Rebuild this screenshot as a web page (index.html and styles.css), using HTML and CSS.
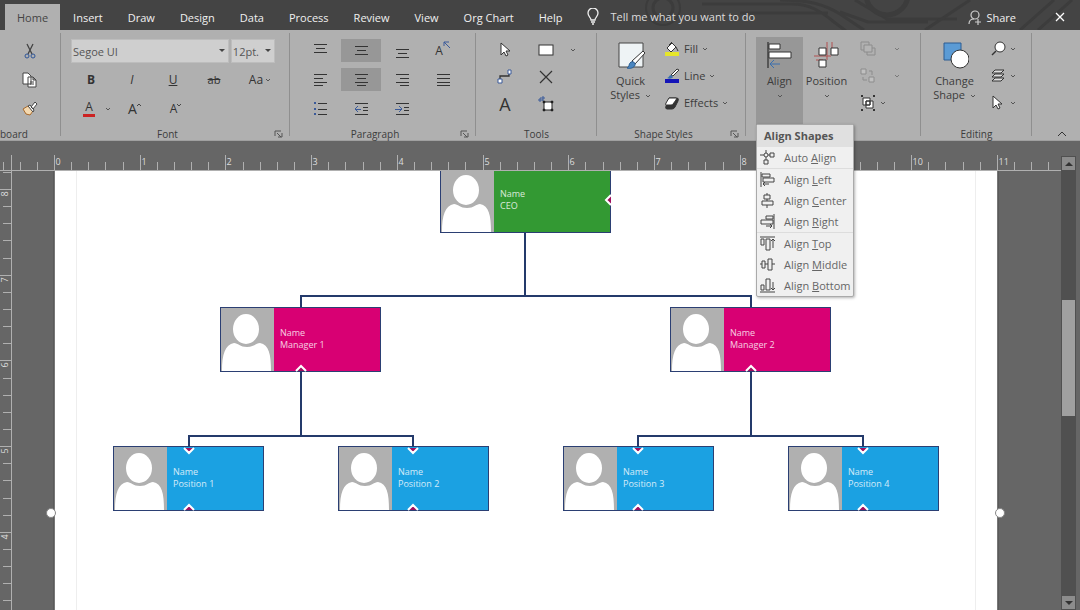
FILE: index.html
```html
<!DOCTYPE html>
<html lang="en">
<head>
    <meta charset="UTF-8">
    <meta name="viewport" content="width=device-width, initial-scale=1.0">
    <title>Org Chart</title>
    <link rel="stylesheet" href="styles.css">
</head>
<body>
    <svg class="defs" aria-hidden="true">
        <symbol id="chev" viewBox="0 0 6 4"><path d="M1 1l2 2 2-2" fill="none" stroke="#555"/></symbol>
        <symbol id="launch" viewBox="0 0 9 8"><path d="M1 6V1h6M3 3l4 4M8 3v4H4" fill="none" stroke="#555"/></symbol>
        <symbol id="person" viewBox="0 0 53 63">
            <path d="M1 63C1 46 4 37 13 35c4 0 6 4 13 4s9-4 13-4c9 2 11 11 11 28z" fill="#fff"/>
            <ellipse cx="25" cy="21" rx="14" ry="16" fill="#b0b0b0"/>
            <ellipse cx="25" cy="21" rx="13" ry="15" fill="#fff"/>
        </symbol>
        <symbol id="cursor" viewBox="0 0 12 16"><path d="M2 1v12l3-3 2 4 2-1-2-4h4z" fill="#fff" stroke="#333"/></symbol>
    </svg>

    <header class="titlebar">
        <svg class="circuit" width="440" height="30" fill="none" stroke="#3c3c3c" stroke-width="3">
            <circle cx="23" cy="8" r="10"/><circle cx="23" cy="8" r="17" stroke-width="2"/>
            <path d="M62 4h90c18 0 30 8 42 18l12 9M100 13h88M140 0c28 0 44 4 60 14l24 16M215 0l32 19h70M200 12l28 10h60"/>
            <circle cx="247" cy="-6" r="21" stroke-width="5"/>
            <path d="M285 30l45-30M380 30l34-30M398 30l34-30"/>
        </svg>
        <nav class="tabs">
            <a href="#" class="active">Home</a>
            <a href="#">Insert</a>
            <a href="#">Draw</a>
            <a href="#">Design</a>
            <a href="#">Data</a>
            <a href="#">Process</a>
            <a href="#">Review</a>
            <a href="#">View</a>
            <a href="#">Org Chart</a>
            <a href="#">Help</a>
        </nav>
        <label class="tell">
            <svg width="12" height="17" fill="none" stroke="#eee" stroke-width="1.3"><path d="M4 12c0-3-3-3-3-7a5 5 0 0 1 10 0c0 4-3 4-3 7zM4 14h4M5 16h2"/></svg>
            <input type="text" placeholder="Tell me what you want to do" aria-label="Tell me what you want to do">
        </label>
        <button class="share">
            <svg width="14" height="15" fill="none" stroke="#ccc" stroke-width="1.2"><circle cx="7" cy="5" r="4"/><path d="M1 14c0-3 2-5 5-5M7 12h6M10 9v6"/></svg>
            Share
        </button>
        <button class="close" aria-label="Close"><svg width="10" height="10" stroke="#fff" stroke-width="1.3"><path d="M1 1l8 8M9 1l-8 8"/></svg></button>
    </header>

    <section class="ribbon">
        <div class="group clipboard">
            <div class="tools">
                <button aria-label="Cut"><svg width="12" height="16" fill="none" stroke="#444"><path d="M3 1l5 10M9 1L4 11" stroke-width="1.3"/><circle cx="3" cy="13" r="2" stroke="#2f5597"/><circle cx="9" cy="13" r="2" stroke="#2f5597"/></svg></button>
                <button aria-label="Copy"><svg width="16" height="16" fill="#fff" stroke="#444"><path d="M1 1h5l3 3v8H1zM6 5h5l3 3v7H6zM11 5v3h3M8 10h4M8 12h4"/></svg></button>
                <button aria-label="Format painter"><svg width="16" height="16"><path d="M1 8l5-3 5 5-3 4-4-1z" fill="#f4d9b0" stroke="#a86a2c"/><path d="M6 5l2-1 4 5-1 2zM9 6l4-5 2 2-4 5z" fill="#fff" stroke="#444"/></svg></button>
            </div>
            <footer><span>board</span></footer>
        </div>

        <div class="group font">
            <div class="tools">
                <div class="selects">
                    <span class="select family"><select aria-label="Font"><option>Segoe UI</option></select></span>
                    <span class="select size"><select aria-label="Font size"><option>12pt.</option></select></span>
                </div>
                <button class="glyph"><b>B</b></button>
                <button class="glyph"><i>I</i></button>
                <button class="glyph"><u>U</u></button>
                <button class="glyph small"><s>ab</s></button>
                <button class="glyph wide">Aa <svg class="chev"><use href="#chev"/></svg></button>
                <button class="glyph color"><span>A</span> <svg class="chev"><use href="#chev"/></svg></button>
                <button class="glyph big">A<svg width="5" height="12" fill="none" stroke="#444"><path d="M0 3l2-2 2 2"/></svg></button>
                <button class="glyph shrink">A<svg width="5" height="12" fill="none" stroke="#444"><path d="M0 1l2 2 2-2"/></svg></button>
            </div>
            <footer><span>Font</span><button aria-label="Font settings"><svg width="9" height="8"><use href="#launch"/></svg></button></footer>
        </div>

        <div class="group paragraph">
            <div class="tools">
                <button aria-label="Top"><svg class="lines"><path d="M1 1h13M3 5h9M1 9h13"/></svg></button>
                <button class="on" aria-label="Middle"><svg class="lines"><path d="M1 3h13M3 7h9M1 11h13"/></svg></button>
                <button aria-label="Bottom"><svg class="lines"><path d="M1 6h13M3 10h9M1 14h13"/></svg></button>
                <button aria-label="Text direction" class="glyph direction">A<svg width="8" height="14" fill="none" stroke="#3a5a9a"><path d="M1 5V1h5M1 1l6 6"/></svg></button>
                <button aria-label="Left"><svg class="lines"><path d="M1 2h13M1 6h9M1 10h13M1 13h9"/></svg></button>
                <button class="on" aria-label="Center"><svg class="lines"><path d="M1 2h13M3 6h9M1 10h13M3 13h9"/></svg></button>
                <button aria-label="Right"><svg class="lines"><path d="M1 2h13M5 6h9M1 10h13M5 13h9"/></svg></button>
                <button aria-label="Justify"><svg class="lines"><path d="M1 2h13M1 6h13M1 10h13M1 13h13"/></svg></button>
                <button aria-label="Bullets"><svg class="lines"><path d="M5 2h9M5 8h9M5 13h9"/><path d="M1 2h2M1 8h2M1 13h2" stroke="#3a5a9a" stroke-width="2"/></svg></button>
                <button aria-label="Decrease indent"><svg class="lines"><path d="M1 2h13M9 6h5M9 9h5M1 13h13"/><path d="M7 8H2M4 5L1 8l3 3" stroke="#3a5a9a"/></svg></button>
                <button aria-label="Increase indent"><svg class="lines"><path d="M1 2h13M9 6h5M9 9h5M1 13h13"/><path d="M0 8h6M4 5l3 3-3 3" stroke="#3a5a9a"/></svg></button>
            </div>
            <footer><span>Paragraph</span><button aria-label="Paragraph settings"><svg width="9" height="8"><use href="#launch"/></svg></button></footer>
        </div>

        <div class="group draw">
            <div class="tools tight">
                <button aria-label="Pointer"><svg width="12" height="16"><use href="#cursor"/></svg></button>
                <button aria-label="Rectangle"><svg width="16" height="12"><rect x="1" y="1" width="14" height="10" fill="#fff" stroke="#333"/></svg></button>
                <button aria-label="More shapes"><svg class="chev"><use href="#chev"/></svg></button>
                <button class="first" aria-label="Connector"><svg width="16" height="15" fill="none" stroke="#333"><path d="M3 10V7h9V5" stroke-width="1.3"/><path d="M1 10h4v4H1zM11 1h3v4h-3z" fill="#fff" stroke="#3a5a9a"/></svg></button>
                <button aria-label="Delete"><svg width="14" height="14" stroke="#333" stroke-width="1.2"><path d="M1 1l12 12M13 1L1 13"/></svg></button>
                <button class="glyph huge first">A</button>
                <button aria-label="Connection point"><svg width="16" height="16"><path d="M2 6V2h5M5 0v5M0 4h5" fill="none" stroke="#3a5a9a"/><rect x="6" y="6" width="8" height="8" fill="#fff" stroke="#222"/><path d="M5 5h2v2H5zM13 5h2v2h-2zM5 13h2v2H5zM13 13h2v2h-2z" fill="#222" stroke="#222" stroke-width=".5"/></svg></button>
            </div>
            <footer><span>Tools</span></footer>
        </div>

        <div class="group shapes">
            <div class="row">
                <button class="large">
                    <svg width="28" height="29"><path d="M2 2h24v24H2z" fill="#eef3f5" stroke="#444"/><path d="M26 10l2 2-10 11-3-3z" fill="#fff" stroke="#333"/><path d="M10 27c3-1 1-4 4-6 2-1 5 1 4 3-1 3-5 4-8 3z" fill="#4a86c0" stroke="#2c5d92"/></svg>
                    <span>Quick<br>Styles <svg class="chev"><use href="#chev"/></svg></span>
                </button>
                <div class="list">
                    <button><svg width="16" height="16"><path d="M3 7l5-5 4 4-5 5z" fill="#fff" stroke="#333"/><path d="M5 4l3-3M12 6l2 4" stroke="#333" fill="none"/><path d="M1 11h14v4H1z" fill="#e6e62a"/></svg>Fill <svg class="chev"><use href="#chev"/></svg></button>
                    <button><svg width="16" height="16"><path d="M13 1l2 1-6 6-2-1z" fill="#fff" stroke="#333"/><path d="M3 10c2 0 2-3 4-3l2 2c-1 2-4 2-6 1z" fill="#3a6fae"/><path d="M1 11h14v4H1z" fill="#1414b8"/></svg>Line <svg class="chev"><use href="#chev"/></svg></button>
                    <button class="effects"><svg width="16" height="14"><path d="M5 2h8q2 0 1 3l-3 6q-1 2-3 2H3q-2 0-1-3z" fill="#333" stroke="#333"/><path d="M5 2h7q1 0 0 2L9 8q0 1-2 1H2q-1 0 0-2z" fill="#fff" stroke="#333"/></svg>Effects <svg class="chev"><use href="#chev"/></svg></button>
                </div>
            </div>
            <footer><span>Shape Styles</span><button aria-label="Shape style settings"><svg width="9" height="8"><use href="#launch"/></svg></button></footer>
        </div>

        <div class="group arrange">
            <div class="row">
                <div class="dropdown">
                    <button class="large on">
                        <svg width="28" height="29"><path d="M2 1v26" stroke="#333" stroke-width="1.3"/><path d="M3 3h11v5H3zM3 11h22v6H3z" fill="#fff" stroke="#333"/><path d="M14 23H4M8 19l-4 4 4 4" fill="none" stroke="#3a6fae"/></svg>
                        <span>Align<br><svg class="chev"><use href="#chev"/></svg></span>
                    </button>
                    <div class="menu">
                        <h2>Align Shapes</h2>
                        <button><svg class="mi"><path d="M0 5h4M6 0v3M8 5h2M6 7v3"/><circle cx="6" cy="5" r="2"/><path d="M10 3h4v4h-4zM4 10h4v4H4z"/></svg><span>Auto <u>A</u>lign</span></button>
                        <hr>
                        <button><svg class="mi"><path d="M1 0v15M2 2h8v3H2zM3 6h11v4H3zM3 12h6M5 10l-2 2 2 2"/></svg><span>Align <u>L</u>eft</span></button>
                        <button><svg class="mi"><path d="M7 0v2M7 6v2M7 12v3M4 2h6v4H4zM2 8h11v4H2z"/></svg><span>Align <u>C</u>enter</span></button>
                        <button><svg class="mi"><path d="M14 0v15M6 2h7v3H6zM1 6h12v4H1zM6 12h6M10 10l2 2-2 2"/></svg><span>Align <u>R</u>ight</span></button>
                        <hr>
                        <button><svg class="mi"><path d="M0 1h15M1 3h3v6H1zM6 3h4v11H6zM13 12V3M11 5l2-2 2 2"/></svg><span>Align <u>T</u>op</span></button>
                        <button><svg class="mi"><path d="M0 7h2M5 7h3M12 7h3M2 4h3v7H2zM8 2h4v11H8z"/></svg><span>Align <u>M</u>iddle</span></button>
                        <button><svg class="mi"><path d="M0 14h15M1 7h3v5H1zM6 1h4v11H6zM13 4v8M11 10l2 2 2-2"/></svg><span>Align <u>B</u>ottom</span></button>
                    </div>
                </div>
                <button class="large">
                    <svg width="28" height="29"><path d="M14 1v18M19 1v12M1 15h17M3 19h7" stroke="#b05050" fill="none"/><path d="M6 7h7v7H6zM18 7h7v7h-7zM6 19h7v7H6z" fill="#fff" stroke="#333"/></svg>
                    <span>Position<br><svg class="chev"><use href="#chev"/></svg></span>
                </button>
                <div class="list order">
                    <button class="off" aria-label="Bring forward"><svg width="16" height="16" fill="none" stroke="#777"><path d="M1 1h8v8H1zM7 7h8v7H7z"/><path d="M4 4h8v7H4z" fill="#b8b8b8"/></svg><svg class="chev"><use href="#chev"/></svg></button>
                    <button class="off" aria-label="Send backward"><svg width="16" height="16" fill="none" stroke="#777"><path d="M1 1h5v5H1zM9 9h5v5H9z" fill="#ccc"/><path d="M9 3h3v4M3 9v3h4"/></svg><svg class="chev"><use href="#chev"/></svg></button>
                    <button aria-label="Group"><svg width="16" height="16" fill="none" stroke="#333"><path d="M3 3h7v7H3zM6 6h7v7H6z" fill="#fff"/><path d="M6 6h4v4H6z"/><path d="M1 1h2M13 1h2M1 15h2M13 15h2" stroke-width="2"/></svg><svg class="chev"><use href="#chev"/></svg></button>
                </div>
            </div>
        </div>

        <div class="group editing">
            <div class="row">
                <button class="large">
                    <svg width="28" height="29"><path d="M3 2h17v17H3z" fill="#5b9bd5" stroke="#2c5d92"/><circle cx="19" cy="18" r="9" fill="#fff" stroke="#333"/></svg>
                    <span>Change<br>Shape <svg class="chev"><use href="#chev"/></svg></span>
                </button>
                <div class="list icons">
                    <button aria-label="Find"><svg width="16" height="16"><circle cx="9" cy="6" r="5" fill="#fff" stroke="#333"/><path d="M5 10l-4 4" stroke="#333" stroke-width="1.5"/></svg><svg class="chev"><use href="#chev"/></svg></button>
                    <button aria-label="Layers"><svg width="16" height="16" fill="#ddd" stroke="#333"><path d="M4 10l-3 3h9l3-3zM4 6L1 9h9l3-3zM4 2L1 5h9l3-3z"/></svg><svg class="chev"><use href="#chev"/></svg></button>
                    <button aria-label="Select"><svg width="16" height="16"><use href="#cursor" width="12" height="16"/></svg><svg class="chev"><use href="#chev"/></svg></button>
                </div>
            </div>
            <footer><span>Editing</span></footer>
        </div>

        <div class="group rest">
            <button aria-label="Collapse ribbon"><svg width="10" height="6" fill="none" stroke="#333"><path d="M1 5l4-4 4 4"/></svg></button>
        </div>
    </section>

    <main class="workspace">
        <svg class="ruler top"></svg>
        <svg class="ruler left"></svg>
        <div class="canvas">
            <div class="page">
                <div class="card ceo"><svg><use href="#person"/></svg><p>Name<br>CEO</p></div>
                <div class="card manager m1"><svg><use href="#person"/></svg><p>Name<br>Manager 1</p></div>
                <div class="card manager m2"><svg><use href="#person"/></svg><p>Name<br>Manager 2</p></div>
                <div class="card position p1"><svg><use href="#person"/></svg><p>Name<br>Position 1</p></div>
                <div class="card position p2"><svg><use href="#person"/></svg><p>Name<br>Position 2</p></div>
                <div class="card position p3"><svg><use href="#person"/></svg><p>Name<br>Position 3</p></div>
                <div class="card position p4"><svg><use href="#person"/></svg><p>Name<br>Position 4</p></div>
                <svg class="links">
                    <path class="line" d="M470 62v63M246 136v-11h450v11M246 200v65M134 276v-11h224v11M696 200v65M583 276v-11h225v11"/>
                    <path class="mark" d="M556 24l-5 5 5 5M241 200l5-5 5 5M691 200l5-5 5 5"/>
                    <path class="mark" d="M129 277l5 5 5-5M353 277l5 5 5-5M578 277l5 5 5-5M803 277l5 5 5-5"/>
                    <path class="mark" d="M129 339l5-5 5 5M353 339l5-5 5 5M578 339l5-5 5 5M803 339l5-5 5 5"/>
                </svg>
            </div>
            <i class="handle start"></i>
            <i class="handle end"></i>
        </div>
        <div class="scrollbar">
            <button aria-label="Scroll up"><svg width="8" height="4"><path d="M0 4l4-4 4 4z" fill="#333"/></svg></button>
            <div class="track"><div class="thumb"></div></div>
            <button aria-label="Scroll down"><svg width="8" height="4"><path d="M0 0h8L4 4z" fill="#333"/></svg></button>
        </div>
    </main>

    <script src="script.js"></script>
</body>
</html>
```
FILE: styles.css
```css
* {
    box-sizing: border-box;
}

body {
    margin: 0;
    min-height: 100vh;
    display: flex;
    flex-direction: column;
    font-family: "Open Sans", "Noto Sans", sans-serif;
    font-size: 11px;
    color: #3c3c3c;
    background: #666;
    overflow: hidden;
}

button, select, input {
    font: inherit;
    color: inherit;
    border: 0;
    padding: 0;
    background: none;
}

svg {
    flex: none;
}

.defs {
    position: absolute;
    width: 0;
    height: 0;
}

.chev {
    width: 6px;
    height: 4px;
    margin-left: 2px;
    vertical-align: middle;
}

/* title bar */
.titlebar {
    position: relative;
    height: 30px;
    display: flex;
    align-items: center;
    background: #444;
    color: #f0f0f0;
    padding-left: 5px;
}

.circuit {
    position: absolute;
    top: 0;
    right: 0;
}

.tabs {
    display: flex;
    gap: 1px;
    align-self: stretch;
    padding-top: 4px;
}

.tabs a {
    display: flex;
    align-items: center;
    padding: 0 12px;
    color: inherit;
    text-decoration: none;
    font-weight: 500;
}

.tabs a.active {
    background: #b0b0b0;
    color: #444;
}

.tell {
    position: relative;
    display: flex;
    align-items: center;
    gap: 11px;
    flex: 1;
    margin-left: 13px;
    padding-top: 3px;
}

.tell input {
    flex: 1;
}

.tell input::placeholder {
    color: #ddd;
    opacity: 1;
}

.share {
    position: relative;
    display: flex;
    align-items: center;
    gap: 4px;
    padding-top: 4px;
    font-weight: 500;
}

.close {
    position: relative;
    display: flex;
    margin: 3px 15px 0 39px;
}

/* ribbon */
.ribbon {
    display: flex;
    height: 111px;
    background: #b0b0b0;
    border-bottom: 1px solid #a0a0a0;
}

.group {
    position: relative;
    display: flex;
    flex-direction: column;
    flex: none;
}

.group::after {
    content: "";
    position: absolute;
    right: 0;
    top: 3px;
    bottom: 4px;
    width: 1px;
    background: #8f8f8f;
}

.rest::after {
    display: none;
}

.group footer {
    display: flex;
    align-items: center;
    height: 12px;
    margin-top: auto;
    font-size: 10px;
    line-height: 12px;
}

.group footer span {
    flex: 1;
    text-align: center;
}

.group footer button {
    display: flex;
    width: 16px;
}

.tools {
    display: grid;
    grid-template-columns: repeat(5, 40px);
    grid-auto-rows: 23px;
    gap: 6px 1px;
    padding: 9px 0 0 10px;
}

.tools.tight {
    padding-top: 8px;
    row-gap: 4px;
}

.tools button {
    display: flex;
    align-items: center;
    justify-content: center;
}

.on {
    background: #979797;
}

.clipboard { width: 61px; }
.font { width: 229px; }
.paragraph { width: 186px; }
.draw { width: 121px; }
.shapes { width: 149px; }
.arrange { width: 175px; }
.editing { width: 111px; }
.rest { flex: 1; }

.clipboard .tools {
    grid-template-columns: 40px;
}

.clipboard footer span {
    text-align: left;
}

.paragraph .tools {
    grid-template-columns: repeat(4, 40px);
}

.draw .tools {
    grid-template-columns: 40px 40px 10px;
    padding-left: 9px;
}

.draw .first {
    grid-column: 1;
}

.selects {
    grid-column: 1 / -1;
    display: flex;
    gap: 2px;
    color: #555;
}

.select {
    position: relative;
    display: flex;
    height: 24px;
    background: #cfcfcf;
    border: 1px solid #bdbdbd;
}

.select::after {
    content: "";
    position: absolute;
    right: 3px;
    top: 9px;
    border: 3px solid transparent;
    border-top-color: #444;
    border-bottom: 0;
}

.select select {
    appearance: none;
    width: 100%;
    padding-left: 1px;
}

.family { width: 161px; }
.size { width: 45px; }

.glyph {
    font-size: 12px;
    color: #333;
}

.glyph.small {
    font-size: 11px;
}

.glyph.big {
    font-size: 14px;
    padding-left: 6px;
}

.glyph.shrink {
    padding-left: 6px;
}

.glyph.huge {
    font-size: 18px;
}

.glyph.wide {
    padding-left: 10px;
}

.direction svg {
    margin-bottom: 6px;
}

.color {
    gap: 8px;
    padding-left: 12px;
}

.color span {
    width: 14px;
    height: 17px;
    line-height: 14px;
    border-bottom: 3px solid #c22;
}

.lines {
    width: 15px;
    height: 15px;
    fill: none;
    stroke: #333;
    shape-rendering: crispEdges;
}

.row {
    display: flex;
    align-items: flex-start;
    padding: 7px 0 0 10px;
}

.large {
    width: 47px;
    height: 89px;
    display: flex;
    flex-direction: column;
    align-items: center;
    padding-top: 4px;
    line-height: 14px;
    white-space: nowrap;
}

.large span {
    margin-top: 4px;
}

.list {
    display: flex;
    flex-direction: column;
    gap: 4px;
    margin-left: 10px;
}

.list button {
    display: flex;
    align-items: center;
    gap: 4px;
    height: 23px;
}

.list .chev {
    margin-left: 0;
}

.order .off {
    gap: 18px;
    opacity: .6;
}

.icons {
    margin-left: 13px;
}

.icons button {
    gap: 3px;
}

.rest button {
    display: flex;
    margin: auto 13px 3px auto;
}

/* align menu */
.dropdown {
    position: relative;
}

.menu {
    position: absolute;
    z-index: 2;
    top: 87px;
    left: 0;
    width: 98px;
    border: 1px solid #aaa;
    border-radius: 2px;
    background: #f0f0f0;
    box-shadow: 1px 1px 3px rgba(0, 0, 0, 0.3);
}

.menu h2 {
    margin: 0;
    padding-left: 7px;
    font-size: 11px;
    line-height: 22px;
    color: #555;
    background: #e0e0e0;
    white-space: nowrap;
}

.menu button {
    display: flex;
    align-items: center;
    gap: 9px;
    width: 100%;
    height: 21px;
    padding-left: 3px;
    color: #666;
    white-space: nowrap;
}

.menu hr {
    height: 1px;
    margin: 0;
    border: 0;
    background: #ddd;
}

.mi {
    width: 15px;
    height: 15px;
    fill: none;
    stroke: #444;
}

/* drawing area */
.workspace {
    flex: 1;
    display: grid;
    grid-template-columns: 12px 1fr 19px;
    grid-template-rows: 30px 1fr;
}

.ruler {
    width: 100%;
    height: 100%;
    stroke: #b0b0b0;
    shape-rendering: crispEdges;
}

.ruler text {
    fill: #ddd;
    stroke: none;
    font-size: 9px;
}

.ruler.top {
    grid-column: 1 / 3;
}

.ruler.left {
    grid-area: 2 / 1;
}

.canvas {
    grid-area: 2 / 2;
    position: relative;
    overflow: hidden;
}

.page {
    position: relative;
    width: 942px;
    height: 100%;
    margin-left: 43px;
    background: #fff;
    box-shadow: 0 0 0 1px #777, 0 0 0 2px #5a5a5a;
}

/* print margins */
.page::before {
    content: "";
    position: absolute;
    inset: 0 21px;
    border: solid #eee;
    border-width: 0 1px;
}

.handle {
    position: absolute;
    top: 337px;
    width: 10px;
    height: 10px;
    border: 1px solid #888;
    border-radius: 50%;
    background: #fff;
}

.start { left: 34px; }
.end { left: 983px; }

.card {
    position: absolute;
    display: flex;
    align-items: center;
    height: 65px;
    border: 1px solid #2b3f73;
    font-size: 9px;
    line-height: 12px;
    color: #fff;
}

.card svg {
    width: 53px;
    height: 63px;
    background: #b0b0b0;
}

.card p {
    margin: 0 0 0 6px;
    padding-bottom: 2px;
    opacity: .8;
}

.ceo {
    left: 385px;
    top: -3px;
    width: 171px;
    background: #393;
}

.manager {
    top: 136px;
    width: 161px;
    background: #d80073;
}

.position {
    top: 275px;
    width: 151px;
    background: #1ba1e2;
}

.m1 { left: 165px; }
.m2 { left: 615px; }
.p1 { left: 58px; }
.p2 { left: 283px; }
.p3 { left: 508px; }
.p4 { left: 733px; }

.links {
    position: absolute;
    inset: 0;
    width: 100%;
    height: 100%;
    fill: none;
}

.line {
    stroke: #243a6b;
    stroke-width: 2;
}

.mark {
    stroke: #fff;
    stroke-width: 2;
    fill: #a0105f;
}

.scrollbar {
    grid-area: 1 / 3 / 3 / 4;
    display: flex;
    flex-direction: column;
    width: 15px;
    margin-top: 15px;
    padding: 1px;
    background: #505050;
}

.scrollbar button {
    display: flex;
    align-items: center;
    justify-content: center;
    height: 13px;
    background: #8c8c8c;
}

.track {
    flex: 1;
    padding-top: 130px;
}

.thumb {
    height: 116px;
    background: #a0a0a0;
}
```
FILE: script.js
```javascript
// one ruler unit is 600/7 px, split into five divisions
const STEP = 120 / 7;

function drawTop() {
    let out = '<path d="M0 29.5H4000M11.5 14V30"/>';
    for (let i = -3; i < 59; i++) {
        const x = Math.round(54 + i * STEP) + 0.5;
        const major = i % 5 === 0;
        out += `<path d="M${x} ${major ? 14 : 21}V30"/>`;
        if (major) out += `<text x="${x + 1}" y="24">${i / 5}</text>`;
    }
    document.querySelector('.ruler.top').innerHTML = out;
}

function drawLeft() {
    let out = '<path d="M11.5 0V2000"/>';
    for (let i = -1; i < 40; i++) {
        const y = Math.round(18 + i * STEP) + 0.5;
        const major = i % 5 === 0;
        out += `<path d="M${major ? 0 : 3} ${y}H12"/>`;
        if (major) out += `<text transform="translate(8 ${y + 7}) rotate(-90)">${8 - i / 5}</text>`;
    }
    document.querySelector('.ruler.left').innerHTML = out;
}

drawTop();
drawLeft();
```
